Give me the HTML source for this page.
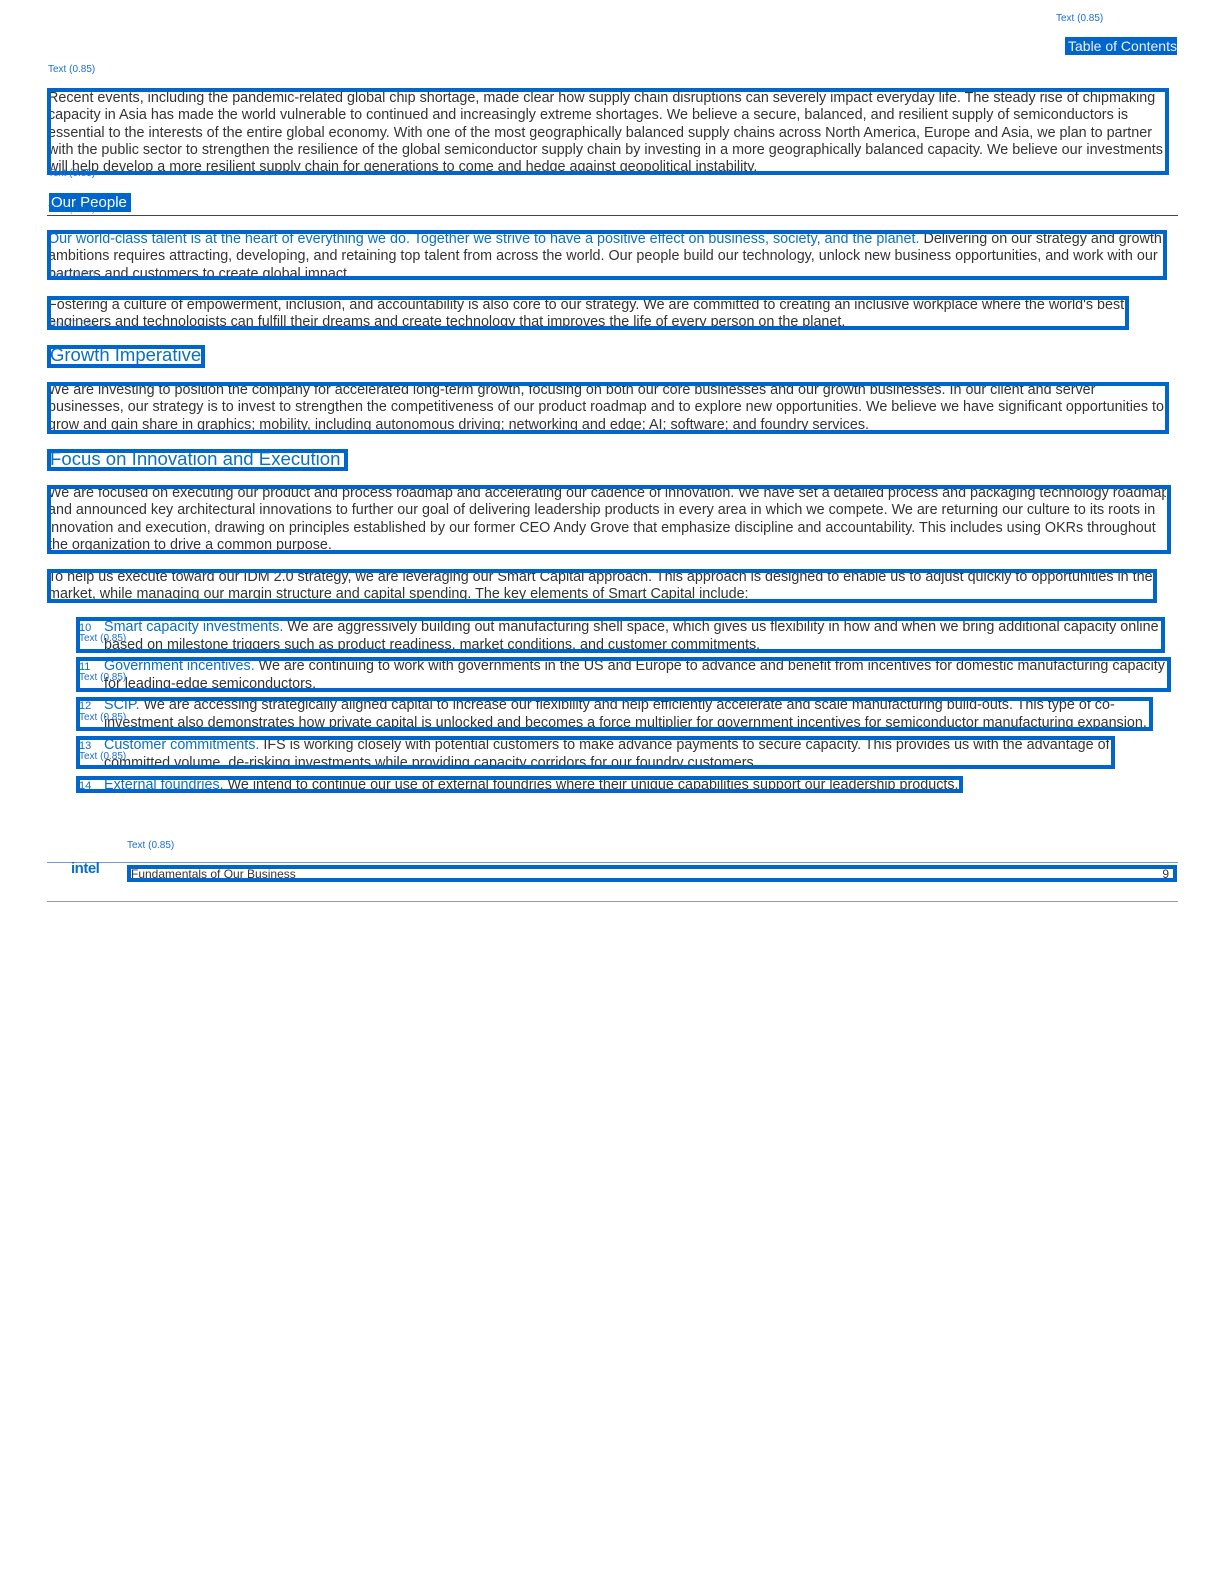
<!DOCTYPE html>
<html><head><meta charset="utf-8"><style>
body{margin:0;width:1224px;height:1584px;background:#fff;position:relative;overflow:hidden;font-family:"Liberation Sans",Arial,sans-serif;}
.b{position:absolute;border:4px solid #0066cc;box-sizing:border-box;z-index:3}
.f{position:absolute;background:#0066cc;z-index:2}
.t{position:absolute;font-size:14.35px;line-height:17.3px;color:#333;white-space:nowrap;overflow:hidden;z-index:1;margin-top:1px}
.it{margin-top:2px}
.blue{color:#0a6fc2}
.l{position:absolute;font-size:10px;color:#1a6fd0;white-space:nowrap;z-index:4}
.n{font-size:11px;color:#0a6fc2;display:inline-block;width:25px}
.h{position:absolute;color:#0a6fc2;white-space:nowrap;z-index:4}
.line{position:absolute;height:1px;background:#555}
</style></head><body>

<div class="l" style="left:1056px;top:13px">Text (0.85)</div>
<div class="f" style="left:1065px;top:37px;width:112px;height:18px"></div>
<div class="h" style="left:1068px;top:37px;font-size:14px;color:#eef;line-height:18px">Table of Contents</div>

<div class="l" style="left:48px;top:64px">Text (0.85)</div>
<div class="b" style="left:47px;top:88px;width:1122px;height:87px"></div>
<div class="t" style="left:48px;top:89px;width:1116px;height:83px">Recent events, including the pandemic-related global chip shortage, made clear how supply chain disruptions can severely impact everyday life. The steady rise of chipmaking<br>capacity in Asia has made the world vulnerable to continued and increasingly extreme shortages. We believe a secure, balanced, and resilient supply of semiconductors is<br>essential to the interests of the entire global economy. With one of the most geographically balanced supply chains across North America, Europe and Asia, we plan to partner<br>with the public sector to strengthen the resilience of the global semiconductor supply chain by investing in a more geographically balanced capacity. We believe our investments<br>will help develop a more resilient supply chain for generations to come and hedge against geopolitical instability.</div>

<div class="l" style="left:48px;top:168px">Text (0.85)</div>
<div class="f" style="left:49px;top:193px;width:82px;height:19px"></div>
<div class="h" style="left:51px;top:193px;font-size:15px;color:#fff;line-height:19px">Our People</div>
<div class="l" style="left:48px;top:204px;opacity:.6">Text (0.85)</div>
<div class="line" style="left:47px;top:215px;width:1131px;background:#444"></div>

<div class="b" style="left:47px;top:230px;width:1120px;height:50px"></div>
<div class="t" style="left:48px;top:230px;width:1114px;height:46px"><span class="blue">Our world-class talent is at the heart of everything we do. Together we strive to have a positive effect on business, society, and the planet.</span> Delivering on our strategy and growth<br>ambitions requires attracting, developing, and retaining top talent from across the world. Our people build our technology, unlock new business opportunities, and work with our<br>partners and customers to create global impact.</div>
<div class="l" style="left:48px;top:270px;opacity:.6">Text (0.85)</div>

<div class="b" style="left:47px;top:296px;width:1082px;height:34px"></div>
<div class="t" style="left:48px;top:296px;width:1076px;height:31px">Fostering a culture of empowerment, inclusion, and accountability is also core to our strategy. We are committed to creating an inclusive workplace where the world's best<br>engineers and technologists can fulfill their dreams and create technology that improves the life of every person on the planet.</div>
<div class="l" style="left:48px;top:319px;opacity:.6">Text (0.85)</div>

<div class="b" style="left:47px;top:345px;width:158px;height:23px"></div>
<div class="h" style="left:50px;top:344px;font-size:18.5px;line-height:22px">Growth Imperative</div>

<div class="b" style="left:47px;top:382px;width:1122px;height:52px"></div>
<div class="t" style="left:48px;top:381px;width:1116px;height:49px">We are investing to position the company for accelerated long-term growth, focusing on both our core businesses and our growth businesses. In our client and server<br>businesses, our strategy is to invest to strengthen the competitiveness of our product roadmap and to explore new opportunities. We believe we have significant opportunities to<br>grow and gain share in graphics; mobility, including autonomous driving; networking and edge; AI; software; and foundry services.</div>

<div class="b" style="left:47px;top:449px;width:301px;height:22px"></div>
<div class="h" style="left:50px;top:448px;font-size:18.6px;line-height:22px">Focus on Innovation and Execution</div>

<div class="b" style="left:47px;top:485px;width:1124px;height:69px"></div>
<div class="t" style="left:48px;top:484px;width:1118px;height:66px">We are focused on executing our product and process roadmap and accelerating our cadence of innovation. We have set a detailed process and packaging technology roadmap<br>and announced key architectural innovations to further our goal of delivering leadership products in every area in which we compete. We are returning our culture to its roots in<br>innovation and execution, drawing on principles established by our former CEO Andy Grove that emphasize discipline and accountability. This includes using OKRs throughout<br>the organization to drive a common purpose.</div>

<div class="b" style="left:47px;top:569px;width:1110px;height:34px"></div>
<div class="t" style="left:48px;top:568px;width:1104px;height:32px">To help us execute toward our IDM 2.0 strategy, we are leveraging our Smart Capital approach. This approach is designed to enable us to adjust quickly to opportunities in the<br>market, while managing our margin structure and capital spending. The key elements of Smart Capital include:</div>

<div class="b" style="left:76px;top:617px;width:1089px;height:36px"></div>
<div class="t it" style="left:79px;top:617px;width:1080px;height:32px"><span class="n">10</span><span class="blue">Smart capacity investments.</span> We are aggressively building out manufacturing shell space, which gives us flexibility in how and when we bring additional capacity online<br><span class="n"></span>based on milestone triggers such as product readiness, market conditions, and customer commitments.</div>
<div class="l" style="left:79px;top:633px">Text (0.85)</div>

<div class="b" style="left:76px;top:657px;width:1095px;height:35px"></div>
<div class="t it" style="left:79px;top:656px;width:1086px;height:32px"><span class="n">11</span><span class="blue">Government incentives.</span> We are continuing to work with governments in the US and Europe to advance and benefit from incentives for domestic manufacturing capacity<br><span class="n"></span>for leading-edge semiconductors.</div>
<div class="l" style="left:79px;top:672px">Text (0.85)</div>

<div class="b" style="left:76px;top:697px;width:1077px;height:34px"></div>
<div class="t it" style="left:79px;top:695px;width:1068px;height:32px"><span class="n">12</span><span class="blue">SCIP.</span> We are accessing strategically aligned capital to increase our flexibility and help efficiently accelerate and scale manufacturing build-outs. This type of co-<br><span class="n"></span>investment also demonstrates how private capital is unlocked and becomes a force multiplier for government incentives for semiconductor manufacturing expansion.</div>
<div class="l" style="left:79px;top:712px">Text (0.85)</div>

<div class="b" style="left:76px;top:736px;width:1039px;height:33px"></div>
<div class="t it" style="left:79px;top:735px;width:1030px;height:30px"><span class="n">13</span><span class="blue">Customer commitments.</span> IFS is working closely with potential customers to make advance payments to secure capacity. This provides us with the advantage of<br><span class="n"></span>committed volume, de-risking investments while providing capacity corridors for our foundry customers.</div>
<div class="l" style="left:79px;top:751px">Text (0.85)</div>

<div class="b" style="left:76px;top:776px;width:887px;height:17px"></div>
<div class="t it" style="left:79px;top:775px;width:880px;height:15px"><span class="n">14</span><span class="blue">External foundries.</span> We intend to continue our use of external foundries where their unique capabilities support our leadership products.</div>

<div class="l" style="left:127px;top:840px">Text (0.85)</div>
<div class="line" style="left:47px;top:862px;width:1131px;background:#6a9fd0"></div>
<div class="h" style="left:71px;top:860px;font-size:15px;font-weight:bold;color:#0a6fc2;letter-spacing:-0.5px">intel</div>
<div class="b" style="left:127px;top:865px;width:1050px;height:17px"></div>
<div class="t" style="left:131px;top:866px;width:1040px;height:14px;font-size:12px;line-height:15px">Fundamentals of Our Business<span style="position:absolute;right:2px">9</span></div>
<div class="line" style="left:47px;top:901px;width:1131px;background:#999"></div>
</body></html>
